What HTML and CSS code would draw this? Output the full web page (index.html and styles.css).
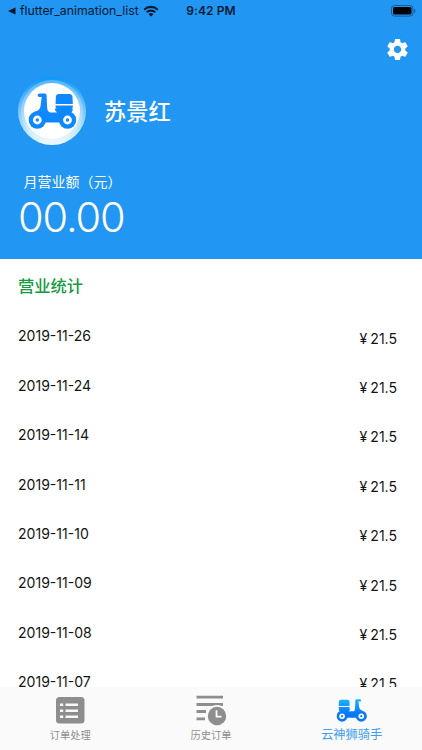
FILE: index.html
```
<!DOCTYPE html>
<html lang="zh-CN">
<head>
<meta charset="utf-8">
<title>云神狮骑手</title>
<link rel="stylesheet" href="styles.css">
</head>
<body>
<svg class="defs" width="0" height="0" aria-hidden="true">
  <defs>
    <linearGradient id="blue" gradientUnits="userSpaceOnUse" x1="0" y1="0" x2="0" y2="36"><stop offset="0" stop-color="#1ab8ff"/><stop offset=".65" stop-color="#0878fb"/></linearGradient>
    <linearGradient id="ring" x1="0" y1="0" x2="0" y2="1"><stop offset="0" stop-color="#0997ff"/><stop offset="1" stop-color="#f0faff"/></linearGradient>
    <symbol id="scooter" viewBox="0 0 48 37">
      <path d="M11.5 1H16.5Q18.3 1 18.3 3L18.8 15Q19.2 20 22.5 20H29Q26.5 18.5 26.5 16H44.3V18.3L43 20L42 30H6V19.4Q11.2 18.5 12.2 14L13.4 4.6H11Q9.3 4.6 9.3 2.8T11.5 1Z"/>
      <circle cx="9" cy="27.6" r="8.7"/><circle cx="39.2" cy="27.6" r="8.7"/>
      <path d="M30 1.7H41.3Q43.8 1.7 44.2 4.2L44.5 11.6H27.3L27.6 4.2Q27.8 1.7 30 1.7ZM27.3 13H44.5V14.5Q44.5 16.5 42.5 16.5H29.3Q27.3 16.5 27.3 14.5Z"/>
      <g fill="#fff"><circle cx="9" cy="27.6" r="4.4"/><circle cx="39.2" cy="27.6" r="4.4"/></g>
      <circle cx="9" cy="27.6" r="1.7"/><circle cx="39.2" cy="27.6" r="1.7"/>
    </symbol>
  </defs>
</svg>
<div class="app">
  <header class="hero">
    <div class="status">
      <div class="back">
        <svg width="8" height="8" viewBox="0 0 8 8"><path d="M0 4 7.5.5V7.5Z"/></svg>
        <span class="origin">flutter_animation_list</span>
        <svg class="wifi" width="16" height="12" viewBox="0 0 16 12"><path d="M1.2 4.7a9.7 9.7 0 0 1 13.6 0M3.8 7.3a6 6 0 0 1 8.4 0" fill="none" stroke="#001a30" stroke-width="2.1"/><path d="M8 11.6 5.6 9.2a3.4 3.4 0 0 1 4.8 0Z"/></svg>
      </div>
      <span class="time">9:42 PM</span>
      <svg class="battery" width="25" height="12" viewBox="0 0 25 12"><rect x=".5" y=".5" width="21.5" height="10.6" rx="3" fill="none" stroke="#135b99"/><rect x="2" y="2" width="18.5" height="7.6" rx="1.6" fill="#000"/><path d="M23.2 4v4q1.3-.6 1.3-2t-1.3-2" fill="#135b99"/></svg>
    </div>
    <div class="toolbar">
      <svg width="25" height="25" viewBox="0 0 24 24" fill="#fff"><path d="M19.43 12.98c.04-.32.07-.64.07-.98s-.03-.66-.07-.98l2.11-1.65c.19-.15.24-.42.12-.64l-2-3.46c-.12-.22-.39-.3-.61-.22l-2.49 1c-.52-.4-1.08-.73-1.69-.98l-.38-2.65C14.46 2.18 14.25 2 14 2h-4c-.25 0-.46.18-.49.42l-.38 2.65c-.61.25-1.17.59-1.69.98l-2.49-1c-.23-.09-.49 0-.61.22l-2 3.46c-.13.22-.07.49.12.64l2.11 1.65c-.04.32-.07.65-.07.98s.03.66.07.98l-2.11 1.65c-.19.15-.24.42-.12.64l2 3.46c.12.22.39.3.61.22l2.49-1c.52.4 1.08.73 1.69.98l.38 2.65c.03.24.24.42.49.42h4c.25 0 .46-.18.49-.42l.38-2.65c.61-.25 1.17-.59 1.69-.98l2.49 1c.23.09.49 0 .61-.22l2-3.46c.12-.22.07-.49-.12-.64l-2.11-1.65zM12 15.5c-1.93 0-3.5-1.57-3.5-3.5s1.57-3.5 3.5-3.5 3.5 1.57 3.5 3.5-1.57 3.5-3.5 3.5z"/></svg>
    </div>
    <div class="profile">
      <svg width="68" height="68" viewBox="0 0 68 68"><circle cx="34" cy="34" r="34" fill="url(#ring)"/><circle cx="34" cy="34" r="31" fill="#fff" opacity=".28"/><circle cx="34" cy="34" r="28" fill="#fff"/><use href="#scooter" x="10.3" y="15.4" width="48" height="37" fill="#0e87ff"/></svg>
      <h1 class="name">苏景红</h1>
    </div>
    <div class="label">月营业额（元）</div>
    <div class="amount">00.00</div>
  </header>
  <main class="stats">
    <h2 class="heading">营业统计</h2>
    <div class="row"><span>2019-11-26</span><span class="price"><i>¥</i>21.5</span></div>
    <div class="row"><span>2019-11-24</span><span class="price"><i>¥</i>21.5</span></div>
    <div class="row"><span>2019-11-14</span><span class="price"><i>¥</i>21.5</span></div>
    <div class="row"><span>2019-11-11</span><span class="price"><i>¥</i>21.5</span></div>
    <div class="row"><span>2019-11-10</span><span class="price"><i>¥</i>21.5</span></div>
    <div class="row"><span>2019-11-09</span><span class="price"><i>¥</i>21.5</span></div>
    <div class="row"><span>2019-11-08</span><span class="price"><i>¥</i>21.5</span></div>
    <div class="row"><span>2019-11-07</span><span class="price"><i>¥</i>21.5</span></div>
  </main>
  <nav class="tabs">
    <div class="tab">
      <svg width="32" height="32" viewBox="0 0 32 32"><rect x="2" y="3" width="28.5" height="26.5" rx="3.5" fill="#8e8e8e"/><path d="M6 10.8h3.2M11.5 10.8H24M6 16.8h3.2M11.5 16.8H24M6 22.8h3.2M11.5 22.8H24" stroke="#fafafa" stroke-width="2.6"/></svg>
      <span>订单处理</span>
    </div>
    <div class="tab">
      <svg width="32" height="32" viewBox="0 0 32 32"><path d="M1.5 3.2H28M1.5 10.5H28M1.5 17.5H11M1.5 24.8H10" stroke="#8e8e8e" stroke-width="2.8"/><circle cx="22" cy="22" r="11" fill="#fafafa"/><circle cx="22" cy="22" r="9.2" fill="#8e8e8e"/><path d="M21.5 16.3V22.7H26.5" fill="none" stroke="#fafafa" stroke-width="1.8"/></svg>
      <span>历史订单</span>
    </div>
    <div class="tab active">
      <svg width="32" height="32" viewBox="0 0 32 32"><g transform="matrix(-1 0 0 1 31 4.5)"><use href="#scooter" width="30.5" height="23.8" fill="url(#blue)"/></g></svg>
      <span>云神狮骑手</span>
    </div>
  </nav>
</div>
</body>
</html>
```
FILE: styles.css
```
* { box-sizing: border-box; }
body { margin: 0; font-family: Inter, "Noto Sans CJK SC", sans-serif; color: #141414; }
.defs { position: absolute; }
svg { display: block; flex: none; }
.app { width: 422px; height: 750px; display: flex; flex-direction: column; overflow: hidden; background: #fff; }
.hero { height: 259px; flex: none; background: #2196f3; color: #fff; }
.status { height: 22px; padding: 0 6px 0 8px; display: grid; grid-template-columns: 1fr auto 1fr; align-items: center; color: #001a30; fill: #001522; font-size: 12px; line-height: 22px; }
.back { display: flex; align-items: center; gap: 4px; }
.origin { font-size: 12.3px; }
.time { font-weight: 600; letter-spacing: .1px; margin-left: -2px; }
.battery { justify-self: end; }
.toolbar { height: 55px; padding: 15px 12px 0 0; display: flex; justify-content: flex-end; }
.profile { height: 68px; padding-left: 18px; display: flex; align-items: center; gap: 18px; }
.profile svg { margin-top: -1px; }
.name { margin: 1px 0 0; font-size: 22.3px; line-height: 30px; font-weight: 500; }
.label { margin: 27px 0 0 23.5px; font-size: 14px; line-height: 20px; }
.amount { margin: 2px 0 0 18px; font-size: 41.5px; line-height: 46px; font-weight: 350; letter-spacing: -1.1px; }
.stats { flex: 1; min-height: 0; overflow: hidden; padding: 13.5px 25px 0 18px; }
.heading { margin: 0 0 26.4px; font-size: 16.3px; line-height: 26px; font-weight: 500; color: #159a43; }
.row { height: 49.4px; padding-top: 1.5px; display: flex; justify-content: space-between; font-size: 14.05px; line-height: 20px; }
.price { padding-top: 2.2px; display: flex; gap: 3px; }
.price i { font-style: normal; }
.tabs { height: 63px; flex: none; display: grid; grid-template-columns: repeat(3, 1fr); background: #fafafa; }
.tab { display: flex; flex-direction: column; align-items: center; padding-top: 7px; color: #8e8e8e; font-size: 10.3px; line-height: 18px; }
.active { color: #429cf0; font-size: 12.2px; line-height: 17px; }
```
